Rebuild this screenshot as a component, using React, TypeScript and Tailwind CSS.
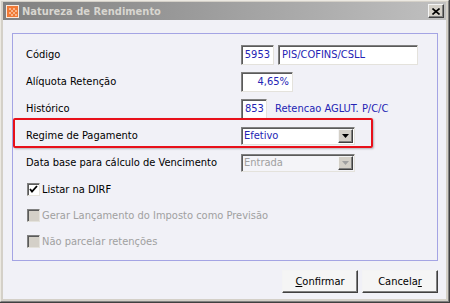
import React from 'react';

const sunken =
  'border border-t-[#808080] border-l-[#808080] border-r-[#e4e2dc] border-b-[#e4e2dc] shadow-[inset_1px_1px_0_#5a5a5a]';
const raised =
  'border border-t-[#f4f4f4] border-l-[#f4f4f4] border-r-[#404040] border-b-[#404040] shadow-[inset_-1px_-1px_0_#808080]';

const Field: React.FC<{ w: string; right?: boolean; text: string }> = ({ w, right, text }) => (
  <div className={`${w} h-[20px] bg-white ${sunken} flex items-center px-[3px] text-[#2424b4] ${right ? 'justify-end' : ''}`}>
    {text}
  </div>
);

const Combo: React.FC<{ text: string; disabled?: boolean }> = ({ text, disabled }) => (
  <div className={`w-[114px] h-[18px] ${disabled ? 'bg-[#f4f4f8] text-[#a0a0a0]' : 'bg-white text-[#2424b4]'} ${sunken} flex items-center`}>
    <span className="flex-1 pl-[2px]">{text}</span>
    <div className={`w-[15px] h-[14px] mr-[1px] bg-[#d4d0c8] ${raised} flex items-center justify-center`}>
      <svg width="7" height="4" viewBox="0 0 7 4">
        <path d="M0 0h7L3.5 4z" fill={disabled ? '#a0a0a0' : '#000'} />
      </svg>
    </div>
  </div>
);

const Check: React.FC<{ checked?: boolean; disabled?: boolean; label: string }> = ({ checked, disabled, label }) => (
  <div className="h-[26px] flex items-center pl-[14px]">
    <div className={`w-[13px] h-[13px] ${disabled ? 'bg-[#d4d0c8]' : 'bg-white'} ${sunken} flex items-center justify-center`}>
      {checked && (
        <svg width="9" height="9" viewBox="0 0 9 9">
          <path d="M1 4l2 2.5L8 1" stroke="#000" strokeWidth="1.8" fill="none" />
        </svg>
      )}
    </div>
    <span className={`ml-[2px] ${disabled ? 'text-[#a0a0a0]' : 'text-black'}`}>{label}</span>
  </div>
);

const App: React.FC = () => {
  return (
    <div
      className="w-[450px] h-[303px] bg-[#d4d0c8] border-r border-b border-r-[#404040] border-b-[#404040] text-[11px] leading-none"
      style={{ fontFamily: '"DejaVu Sans Condensed", "DejaVu Sans", sans-serif' }}
    >
      <div className="w-full h-full border-r border-b border-r-[#808080] border-b-[#808080] border-t border-l border-t-[#ece9e2] border-l-[#ece9e2] pt-[1px] px-[2px] pb-[2px] flex flex-col">
        {/* title bar */}
        <div className="h-[18px] bg-gradient-to-r from-[#808080] to-[#c0c0c0] flex items-center pl-[3px] pr-[2px]">
          <svg width="13" height="13" viewBox="0 0 13 13">
            <rect x="0" y="0" width="13" height="13" fill="#fbe9dc" />
            <rect x="1" y="1" width="11" height="11" fill="#f07a36" />
            <path d="M3 3h2v2H3zM7 3h2v2H7zM5 5h2v2H5zM3 7h2v2H3zM9 5h2v2H9zM7 7h2v2H7zM5 9h2v2H5zM9 9h2v2H9z" fill="#f9b48a" />
          </svg>
          <span className="ml-[3px] font-bold text-[#d8d6d0] text-[11px]">Natureza de Rendimento</span>
          <div className={`ml-auto w-[16px] h-[14px] bg-[#d4d0c8] ${raised} flex items-center justify-center`}>
            <svg width="8" height="7" viewBox="0 0 8 7">
              <path d="M0.5 0.5l7 6M7.5 0.5l-7 6" stroke="#000" strokeWidth="1.6" />
            </svg>
          </div>
        </div>

        {/* client */}
        <div className="flex-1 bg-[#f1f1f7] pt-[13px] pl-[9px] pr-[8px] flex flex-col">
          <div className="relative h-[228px] border border-[#a4a4e4] pt-[7px]">
            <div className="h-[27px] flex items-center pl-[13px]">
              <span className="w-[215px]">Código</span>
              <Field w="w-[33px]" right text="5953" />
              <div className="ml-[4px]">
                <Field w="w-[140px]" text="PIS/COFINS/CSLL" />
              </div>
            </div>
            <div className="h-[27px] flex items-center pl-[13px]">
              <span className="w-[215px]">Alíquota Retenção</span>
              <Field w="w-[52px]" right text="4,65%" />
            </div>
            <div className="h-[27px] flex items-center pl-[13px]">
              <span className="w-[215px]">Histórico</span>
              <Field w="w-[26px]" text="853" />
              <span className="ml-[8px] text-[#2424b4]">Retencao AGLUT. P/C/C</span>
            </div>
            <div className="h-[27px] flex items-center pl-[13px]">
              <span className="w-[215px]">Regime de Pagamento</span>
              <Combo text="Efetivo" />
            </div>
            <div className="h-[27px] flex items-center pl-[13px]">
              <span className="w-[215px]">Data base para cálculo de Vencimento</span>
              <Combo text="Entrada" disabled />
            </div>
            <Check checked label="Listar na DIRF" />
            <Check disabled label="Gerar Lançamento do Imposto como Previsão" />
            <Check disabled label="Não parcelar retenções" />

            {/* highlight annotation */}
            <div className="absolute left-[0px] top-[84px] w-[360px] h-[30px] border-2 border-[#e8101a] rounded-[2px] shadow-[1px_1px_2px_rgba(0,0,0,0.25)]" />
          </div>

          <div className="mt-[9px] flex justify-end gap-[4px]">
            <button className={`w-[76px] h-[23px] bg-[#f5f5f5] ${raised} text-black`}>
              <span className="underline">C</span>onfirmar
            </button>
            <button className={`w-[76px] h-[23px] bg-[#f5f5f5] ${raised} text-black`}>
              Cancela<span className="underline">r</span>
            </button>
          </div>
        </div>
      </div>
    </div>
  );
};

export default App;
